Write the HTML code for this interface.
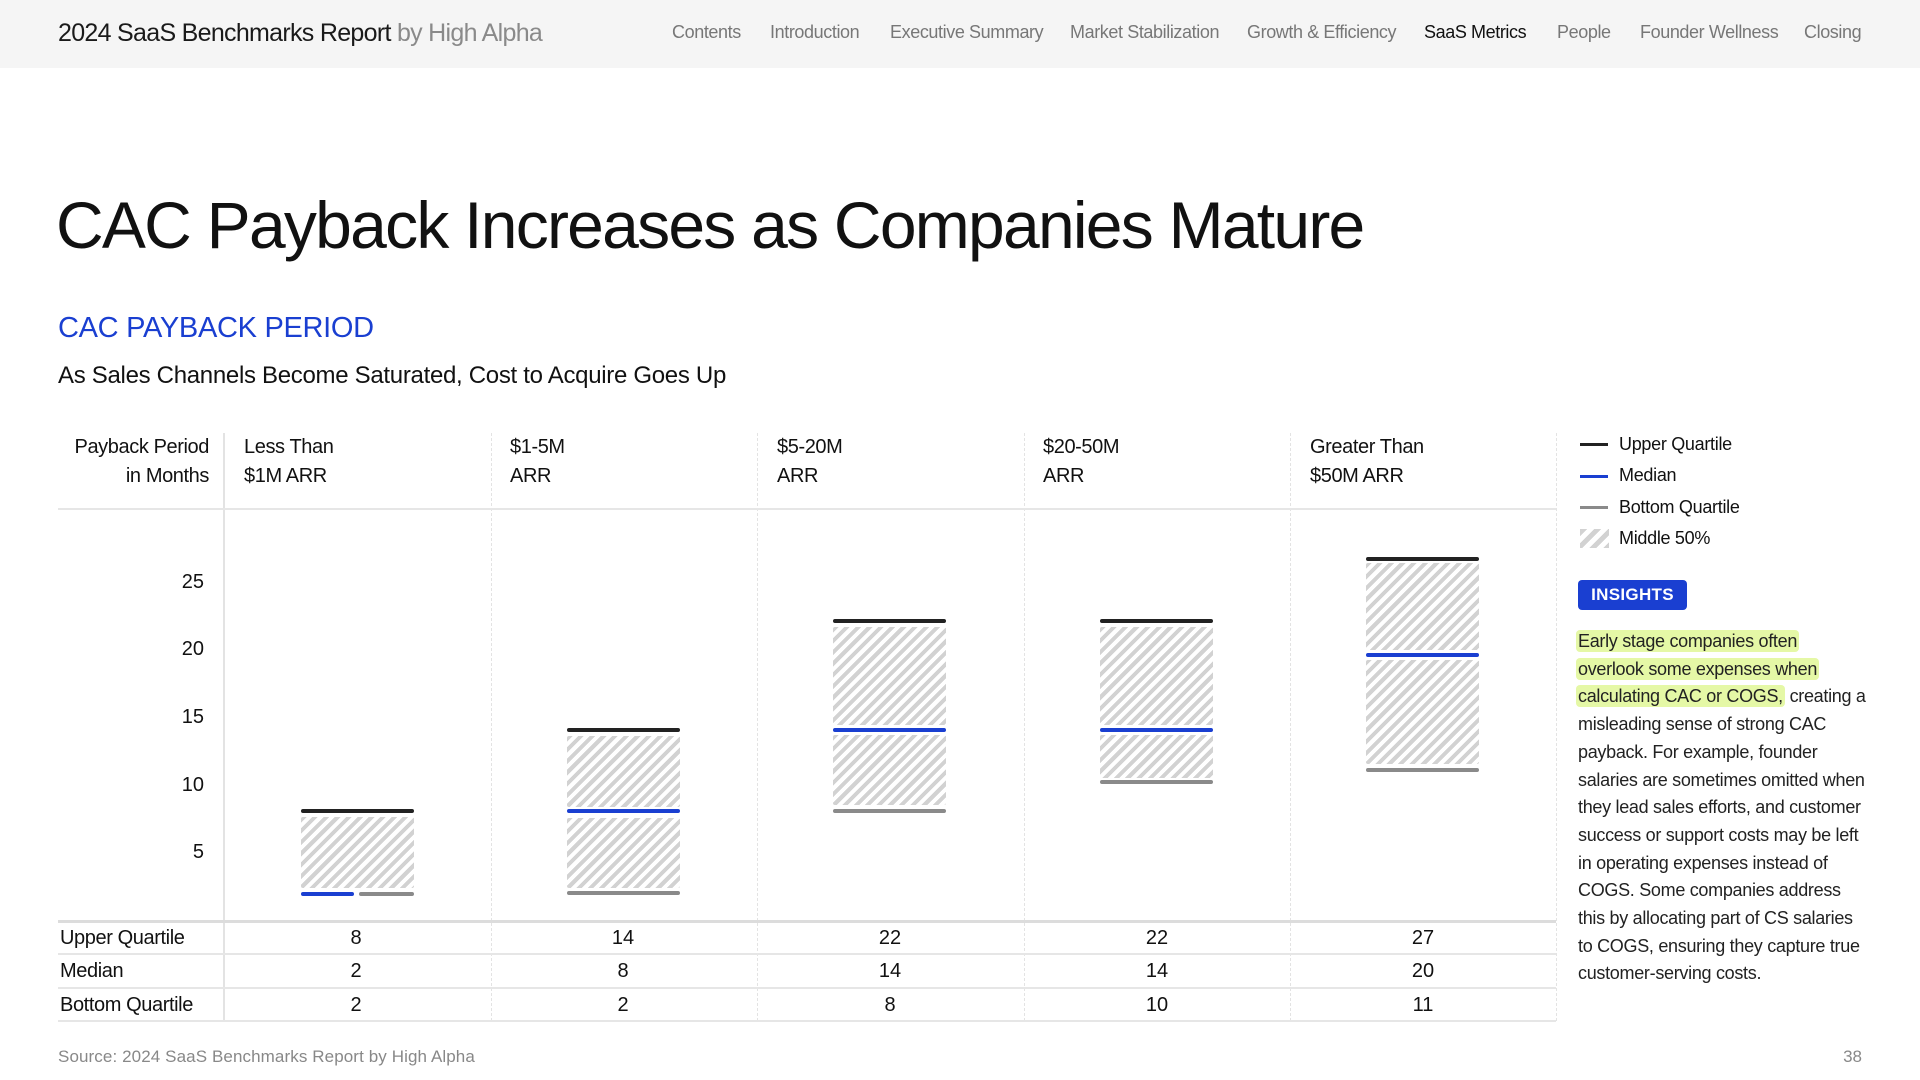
<!DOCTYPE html>
<html><head><meta charset="utf-8"><style>
*{margin:0;padding:0;box-sizing:border-box}
body{width:1920px;height:1080px;background:#fff;font-family:"Liberation Sans",Arial,sans-serif;color:#111;position:relative;overflow:hidden}
.a{position:absolute;white-space:nowrap}
.nav{position:absolute;left:0;top:0;width:1920px;height:68px;background:#f5f5f5}
.ni{position:absolute;top:22px;font-size:18px;color:#777;letter-spacing:-0.4px}
.h{position:absolute;left:0;height:4px;border-radius:2px}
.k{background:#222}.b{background:#1a3fd1}.g{background:#8a8a8a}
.hatch{position:absolute;background:repeating-linear-gradient(135deg,#d2d2d2 0 4px,#fff 4px 8px);border-radius:2px}
.vl{position:absolute;top:433px;height:588px;border-left:1px dashed #e3e3e3}
.hl{position:absolute;left:58px;width:1498px;height:2px;background:#e6e6e6}
.th{position:absolute;top:433px;font-size:20px;line-height:29px;letter-spacing:-0.4px}
.yl{position:absolute;right:1716px;font-size:20px}
.rl{position:absolute;left:60px;font-size:20px;letter-spacing:-0.4px}
.v{position:absolute;width:100px;text-align:center;font-size:20px}
.lg{position:absolute;left:1619px;font-size:18px;letter-spacing:-0.3px}
.ll{position:absolute;left:1580px;width:28px;height:3px}
.ins{position:absolute;left:1578px;top:628px;width:289px;font-size:18px;line-height:27.7px;color:#222;letter-spacing:-0.3px;white-space:normal}
.hi{background:#e5f8a6;border-radius:4px;padding:1px 2px;margin-left:-2px;box-decoration-break:clone;-webkit-box-decoration-break:clone}
</style></head><body>
<div class="nav">
<div class="a" style="left:58px;top:19px;font-size:25px;letter-spacing:-0.7px;color:#1a1a1a">2024 SaaS Benchmarks Report <span style="color:#8a8a8a">by High Alpha</span></div>
<div class="ni" style="left:672px">Contents</div>
<div class="ni" style="left:770px">Introduction</div>
<div class="ni" style="left:890px">Executive Summary</div>
<div class="ni" style="left:1070px">Market Stabilization</div>
<div class="ni" style="left:1247px">Growth &amp; Efficiency</div>
<div class="ni" style="left:1424px;color:#111">SaaS Metrics</div>
<div class="ni" style="left:1557px">People</div>
<div class="ni" style="left:1640px">Founder Wellness</div>
<div class="ni" style="left:1804px">Closing</div>
</div>
<div class="a" style="left:56px;top:187px;font-size:66px;letter-spacing:-1.75px;color:#111">CAC Payback Increases as Companies Mature</div>
<div class="a" style="left:58px;top:312px;font-size:29px;color:#1a3fd1;letter-spacing:-0.3px">CAC PAYBACK PERIOD</div>
<div class="a" style="left:58px;top:362px;font-size:24px;letter-spacing:-0.3px">As Sales Channels Become Saturated, Cost to Acquire Goes Up</div>

<div class="th" style="left:58px;width:151px;text-align:right">Payback Period<br>in Months</div>
<div class="th" style="left:244px">Less Than<br>$1M ARR</div>
<div class="th" style="left:510px">$1-5M<br>ARR</div>
<div class="th" style="left:777px">$5-20M<br>ARR</div>
<div class="th" style="left:1043px">$20-50M<br>ARR</div>
<div class="th" style="left:1310px">Greater Than<br>$50M ARR</div>

<div style="position:absolute;left:223px;top:433px;width:2px;height:588px;background:#e3e3e3"></div>
<div class="vl" style="left:491px"></div>
<div class="vl" style="left:757px"></div>
<div class="vl" style="left:1024px"></div>
<div class="vl" style="left:1290px"></div>
<div class="vl" style="left:1556px"></div>
<div class="hl" style="top:508px"></div>
<div class="hl" style="top:920px;height:3px;background:#dcdcdc"></div>
<div class="hl" style="top:953px"></div>
<div class="hl" style="top:987px"></div>
<div class="hl" style="top:1020px"></div>

<div class="yl" style="top:571px">25</div>
<div class="yl" style="top:638px">20</div>
<div class="yl" style="top:706px">15</div>
<div class="yl" style="top:774px">10</div>
<div class="yl" style="top:841px">5</div>

<div class="hatch" style="left:301px;width:113px;top:817px;height:71px"></div>
<div class="h k" style="left:301px;width:113px;top:809px"></div>
<div class="h b" style="left:301px;width:53px;top:892px"></div>
<div class="h g" style="left:359px;width:55px;top:892px"></div>

<div class="hatch" style="left:567px;width:113px;top:736px;height:71px"></div>
<div class="hatch" style="left:567px;width:113px;top:818px;height:70px"></div>
<div class="h k" style="left:567px;width:113px;top:728px"></div>
<div class="h b" style="left:567px;width:113px;top:809px"></div>
<div class="h g" style="left:567px;width:113px;top:891px"></div>

<div class="hatch" style="left:833px;width:113px;top:627px;height:98px"></div>
<div class="hatch" style="left:833px;width:113px;top:735px;height:70px"></div>
<div class="h k" style="left:833px;width:113px;top:619px"></div>
<div class="h b" style="left:833px;width:113px;top:728px"></div>
<div class="h g" style="left:833px;width:113px;top:809px"></div>

<div class="hatch" style="left:1100px;width:113px;top:627px;height:98px"></div>
<div class="hatch" style="left:1100px;width:113px;top:735px;height:43px"></div>
<div class="h k" style="left:1100px;width:113px;top:619px"></div>
<div class="h b" style="left:1100px;width:113px;top:728px"></div>
<div class="h g" style="left:1100px;width:113px;top:780px"></div>

<div class="hatch" style="left:1366px;width:113px;top:563px;height:87px"></div>
<div class="hatch" style="left:1366px;width:113px;top:660px;height:104px"></div>
<div class="h k" style="left:1366px;width:113px;top:557px"></div>
<div class="h b" style="left:1366px;width:113px;top:653px"></div>
<div class="h g" style="left:1366px;width:113px;top:768px"></div>

<div class="rl" style="top:927px">Upper Quartile</div>
<div class="rl" style="top:960px">Median</div>
<div class="rl" style="top:994px">Bottom Quartile</div>
<div class="v" style="left:306px;top:927px">8</div><div class="v" style="left:306px;top:960px">2</div><div class="v" style="left:306px;top:994px">2</div>
<div class="v" style="left:573px;top:927px">14</div><div class="v" style="left:573px;top:960px">8</div><div class="v" style="left:573px;top:994px">2</div>
<div class="v" style="left:840px;top:927px">22</div><div class="v" style="left:840px;top:960px">14</div><div class="v" style="left:840px;top:994px">8</div>
<div class="v" style="left:1107px;top:927px">22</div><div class="v" style="left:1107px;top:960px">14</div><div class="v" style="left:1107px;top:994px">10</div>
<div class="v" style="left:1373px;top:927px">27</div><div class="v" style="left:1373px;top:960px">20</div><div class="v" style="left:1373px;top:994px">11</div>

<div class="ll" style="top:443px;background:#222"></div><div class="lg" style="top:434px">Upper Quartile</div>
<div class="ll" style="top:475px;background:#1a3fd1"></div><div class="lg" style="top:465px">Median</div>
<div class="ll" style="top:506px;background:#8a8a8a"></div><div class="lg" style="top:497px">Bottom Quartile</div>
<div style="position:absolute;left:1580px;top:529px;width:29px;height:19px;background:repeating-linear-gradient(135deg,#d2d2d2 0 5px,#fff 5px 10px)"></div><div class="lg" style="top:528px">Middle 50%</div>

<div style="position:absolute;left:1578px;top:580px;width:109px;height:30px;background:#1a3fd1;border-radius:4px;color:#fff;font-size:17px;font-weight:bold;text-align:center;line-height:30px;letter-spacing:0.3px">INSIGHTS</div>
<div class="ins"><span class="hi">Early stage companies often overlook some expenses when calculating CAC or COGS,</span> creating a misleading sense of strong CAC payback. For example, founder salaries are sometimes omitted when they lead sales efforts, and customer success or support costs may be left in operating expenses instead of COGS. Some companies address this by allocating part of CS salaries to COGS, ensuring they capture true customer-serving costs.</div>

<div class="a" style="left:58px;top:1047px;font-size:17px;color:#888;letter-spacing:0.1px">Source: 2024 SaaS Benchmarks Report by High Alpha</div>
<div class="a" style="right:58px;top:1047px;font-size:17px;color:#888">38</div>
</body></html>
